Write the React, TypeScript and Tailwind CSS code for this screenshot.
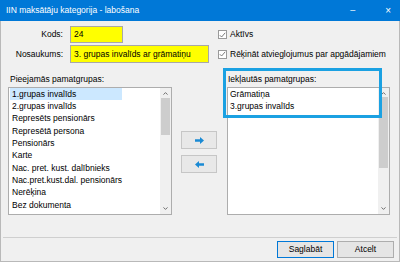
import React from 'react';

const leftItems = [
  '1.grupas invalīds',
  '2.grupas invalīds',
  'Represēts pensionārs',
  'Represētā persona',
  'Pensionārs',
  'Karte',
  'Nac. pret. kust. dalībnieks',
  'Nac.pret.kust.dal. pensionārs',
  'Nerēķina',
  'Bez dokumenta',
];

const rightItems = ['Grāmatiņa', '3.grupas invalīds'];

const Check = () => (
  <span className="flex h-[9px] w-[9px] items-center justify-center border border-[#9a9a9a] bg-white">
    <svg width="7" height="6" viewBox="0 0 7 6">
      <path d="M0.8 3.2 2.6 5 6.2 0.8" fill="none" stroke="#6d6d6d" strokeWidth="0.9" />
    </svg>
  </span>
);

const Chevron = ({ up }: { up?: boolean }) => (
  <svg width="5" height="3" viewBox="0 0 5 3">
    <path d={up ? 'M0.5 2.6 2.5 0.6 4.5 2.6' : 'M0.5 0.4 2.5 2.4 4.5 0.4'} fill="none" stroke="#606060" strokeWidth="0.9" />
  </svg>
);

const Scrollbar = ({ thumbTop, thumbH }: { thumbTop: number; thumbH: number }) => (
  <div className="relative flex h-full w-[11px] flex-col items-center justify-between bg-[#f0f0f0] py-[4px]">
    <Chevron up />
    <div
      className="absolute left-[1px] w-[9px] bg-[#cdcdcd]"
      style={{ top: thumbTop, height: thumbH }}
    />
    <Chevron />
  </div>
);

const Arrow = ({ left }: { left?: boolean }) => (
  <svg width="9" height="7" viewBox="0 0 9 7" className={left ? 'rotate-180' : ''}>
    <path d="M0 2.3h5V0l4 3.5-4 3.5V4.7H0z" fill="#1a8ad4" />
  </svg>
);

export default function App() {
  return (
    <div className="flex h-[262px] w-[400px] flex-col overflow-hidden bg-[#f0f0f0] font-['Liberation_Sans',sans-serif] text-[8.5px] leading-none text-black">
      <div className="flex h-[21px] shrink-0 items-center bg-[#0078d7] pl-[6px] text-white">
        <span className="text-[8.5px]">IIN maksātāju kategorija - labošana</span>
        <span className="ml-auto mr-[30px] text-[9px]">–</span>
        <span className="mr-[9px] text-[10px]">×</span>
      </div>

      <div className="relative flex flex-1 flex-col border-x border-b border-[#b9b9b9]">
        <div className="mt-[5px] flex h-[17px] items-center">
          <span className="w-[62px] text-right">Kods:</span>
          <div className="ml-[7px] flex h-[17px] w-[53px] items-center border border-[#a8a8a8] bg-[#ffff00] pl-[3px]">24</div>
          <div className="ml-[95px] flex items-center gap-[3px]">
            <Check />
            <span>Aktīvs</span>
          </div>
        </div>
        <div className="mt-[2px] flex h-[18px] items-center">
          <span className="w-[62px] text-right">Nosaukums:</span>
          <div className="ml-[7px] flex h-[18px] w-[139px] items-center border border-[#a8a8a8] bg-[#ffff00] pl-[3px]">
            3. grupas invalīds ar grāmatiņu
          </div>
          <div className="ml-[9px] flex items-center gap-[3px]">
            <Check />
            <span>Rēķināt atvieglojumus par apgādājamiem</span>
          </div>
        </div>

        <div className="mt-[10px] flex h-[12px] items-center">
          <span className="ml-[9px] w-[218px]">Pieejamās pamatgrupas:</span>
          <span>Iekļautās pamatgrupas:</span>
        </div>

        <div className="mt-[2px] flex h-[128px]">
          <div className="ml-[7px] flex w-[164px] border border-[#adadad] bg-white">
            <div className="flex-1 overflow-hidden">
              {leftItems.map((item, i) => (
                <div
                  key={item}
                  className={`ml-[1px] flex h-[12.3px] items-center whitespace-nowrap pl-[2px] ${i === 0 ? 'w-[112px] bg-[#cce8ff]' : ''}`}
                >
                  {item}
                </div>
              ))}
            </div>
            <Scrollbar thumbTop={10} thumbH={37} />
          </div>

          <div className="ml-[9px] flex flex-col gap-[6px] pt-[44px]">
            <button className="flex h-[18px] w-[36px] items-center justify-center border border-[#c6c6c6] bg-[#e8e8e8]">
              <Arrow />
            </button>
            <button className="flex h-[18px] w-[36px] items-center justify-center border border-[#c6c6c6] bg-[#e8e8e8]">
              <Arrow left />
            </button>
          </div>

          <div className="ml-[10px] flex w-[163px] border border-[#adadad] bg-white">
            <div className="flex-1">
              {rightItems.map(item => (
                <div key={item} className="flex h-[12.3px] items-center whitespace-nowrap pl-[2px]">
                  {item}
                </div>
              ))}
            </div>
            <Scrollbar thumbTop={9} thumbH={71} />
          </div>
        </div>

        <div className="mx-[2px] mt-[22px] h-px bg-[#cfcfcf]" />

        <div className="mt-[3px] flex justify-end gap-[3px] pr-[5px]">
          <button className="flex h-[17px] w-[57px] items-center justify-center border border-[#0078d7] bg-[#e5e5e5]">
            Saglabāt
          </button>
          <button className="flex h-[17px] w-[57px] items-center justify-center border border-[#adadad] bg-[#e5e5e5]">
            Atcelt
          </button>
        </div>

        <div className="pointer-events-none absolute left-[222px] top-[47px] h-[50px] w-[159px] border-[3px] border-[#1ba1e2]" />
      </div>
    </div>
  );
}
